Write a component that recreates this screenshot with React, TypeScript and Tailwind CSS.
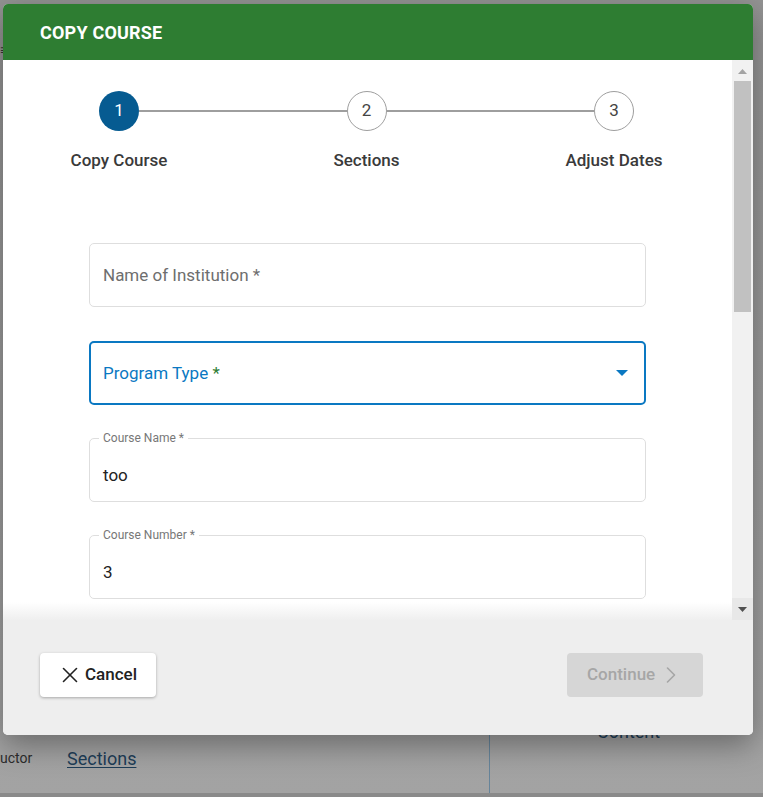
import { X, ChevronRight } from "lucide-react";

const font = { fontFamily: "Roboto, 'Noto Sans', sans-serif" };

const steps = [
  { n: 1, label: "Copy Course", active: true },
  { n: 2, label: "Sections", active: false },
  { n: 3, label: "Adjust Dates", active: false },
];

function StepCircle({ n, active }: { n: number; active: boolean }) {
  return active ? (
    <div className="w-10 h-10 rounded-full bg-[#065b91] text-white flex items-center justify-center text-[17px]">
      {n}
    </div>
  ) : (
    <div className="w-10 h-10 rounded-full border border-[#9e9e9e] bg-white text-[#444] flex items-center justify-center text-[17px]">
      {n}
    </div>
  );
}

function Stepper() {
  return (
    <div className="pt-[31px]">
      <div className="flex items-center pl-[96px] pr-[98px]">
        <StepCircle n={1} active />
        <div className="flex-1 h-[2px] bg-[#9e9e9e]" />
        <StepCircle n={2} active={false} />
        <div className="flex-1 h-[2px] bg-[#9e9e9e]" />
        <StepCircle n={3} active={false} />
      </div>
      <div className="flex justify-between pl-[56px] pr-[58px] mt-[17px]">
        {steps.map((s) => (
          <div key={s.n} className="w-[120px] text-center text-[17px] leading-6 font-medium text-[#3a3a3a]">
            {s.label}
          </div>
        ))}
      </div>
    </div>
  );
}

function OutlinedField({ label, value }: { label: string; value: string }) {
  return (
    <div className="relative h-16 rounded-[5px] border border-[#dedede] flex items-center px-[13px]">
      <span className="absolute -top-[9px] left-[9px] px-[4px] bg-white text-[12px] leading-4 text-[#777]">
        {label}
      </span>
      <span className="text-[17px] text-[#222] pt-[11px]">{value}</span>
    </div>
  );
}

function FakeScrollbar() {
  return (
    <div className="w-[21px] bg-[#f1f1f1] flex flex-col items-center">
      <div className="h-[21px] flex items-center justify-center pt-[2px]">
        <svg width="9" height="5" viewBox="0 0 9 5">
          <path d="M0 5 L4.5 0 L9 5 Z" fill="#a3a3a3" />
        </svg>
      </div>
      <div className="w-[17px] h-[231px] bg-[#c1c1c1]" />
      <div className="flex-1" />
      <div className="h-[22px] w-full bg-[#e8e8e8] flex items-center justify-center">
        <svg width="9" height="5" viewBox="0 0 9 5">
          <path d="M0 0 L9 0 L4.5 5 Z" fill="#505050" />
        </svg>
      </div>
    </div>
  );
}

export default function App() {
  return (
    <div
      className="relative w-[763px] h-[797px] overflow-hidden bg-gradient-to-b from-[#939393] to-[#a3a3a3]"
      style={font}
    >
      {/* background page bits */}
      <div className="absolute left-0 top-[748px] text-[14px] text-[#2c2c2c]">uctor</div>
      <div className="absolute left-[67px] top-[745px] text-[18px] text-[#1d3d57] underline underline-offset-2">
        Sections
      </div>
      <div className="absolute left-[597px] top-[718px] text-[18px] text-[#1d3d57]">Content</div>
      <div className="absolute left-[489px] top-[735px] w-px h-[60px] bg-[#66849a]" />
      <div className="absolute left-0 bottom-0 w-full h-[4px] bg-[#8a8a8a]" />
      <div className="absolute left-0 top-[40px] text-[14px] text-[#333]">≡</div>

      {/* modal */}
      <div className="absolute left-[3px] top-[4px] w-[750px] h-[731px] rounded-[5px] overflow-hidden bg-white shadow-[0_10px_30px_rgba(0,0,0,0.35)] flex flex-col">
        <div className="h-14 bg-[#2e7d32] flex items-center pl-[37px]">
          <h2 className="text-white font-bold text-[18px] tracking-[0.2px]">COPY COURSE</h2>
        </div>

        <div className="relative flex h-[560px]">
          <div className="flex-1 bg-white">
            <Stepper />
            <div className="mx-[86px] mt-[71px] flex flex-col">
              <div className="h-16 rounded-[5px] border border-[#dedede] flex items-center px-[13px]">
                <span className="text-[17px] text-[#6e6e6e] pt-[2px]">Name of Institution *</span>
              </div>
              <div className="mt-[34px] h-16 rounded-[5px] border-2 border-[#0a78c2] flex items-center justify-between pl-[12px] pr-[16px]">
                <span className="text-[17px] text-[#0a78c2] pt-[2px]">
                  Program Type <span className="text-[#2e7d32]">*</span>
                </span>
                <svg width="12" height="6" viewBox="0 0 12 6">
                  <path d="M0 0 L12 0 L6 6 Z" fill="#0a78c2" />
                </svg>
              </div>
              <div className="mt-[33px]">
                <OutlinedField label="Course Name *" value="too" />
              </div>
              <div className="mt-[33px]">
                <OutlinedField label="Course Number *" value="3" />
              </div>
            </div>
          </div>
          <FakeScrollbar />
          <div className="absolute left-0 right-[21px] bottom-0 h-[18px] bg-gradient-to-b from-transparent to-[#efefef]" />
        </div>

        <div className="flex-1 bg-[#eeeeee] flex items-start justify-between pt-[33px] pl-[37px] pr-[50px]">
          <button className="h-11 w-[116px] bg-white rounded-[4px] shadow-[0_1px_3px_rgba(0,0,0,0.3)] flex items-center pl-[17px] gap-[2px] text-[17px] font-medium text-[#222]">
            <X size={26} strokeWidth={1.5} />
            Cancel
          </button>
          <button
            disabled
            className="h-11 w-[136px] bg-[#d6d6d6] rounded-[4px] flex items-center pl-[20px] gap-[2px] text-[17px] font-medium text-[#a6a6a6]"
          >
            Continue
            <ChevronRight size={28} strokeWidth={1.4} />
          </button>
        </div>
      </div>
    </div>
  );
}
